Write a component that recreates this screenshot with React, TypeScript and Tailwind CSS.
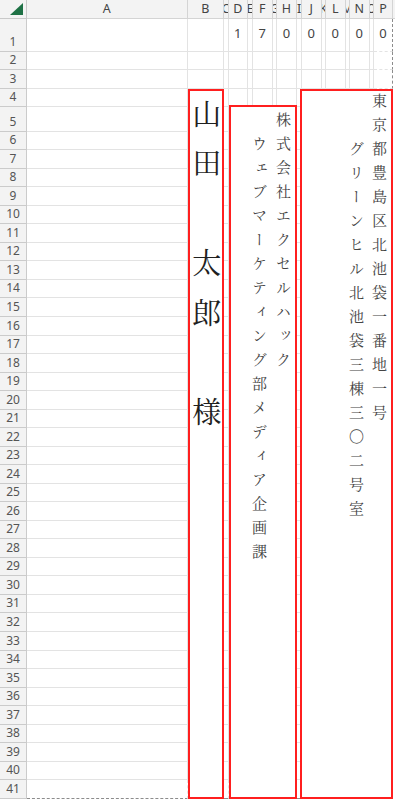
const columns = ["A", "B", "C", "D", "E", "F", "G", "H", "I", "J", "K", "L", "M", "N", "O", "P"];

// 1行目の郵便番号（D, F, H, J, L, N, P 列）
const zip: Record<string, string> = { D: "1", F: "7", H: "0", J: "0", L: "0", N: "0", P: "0" };

const jp = "font-['Noto_Serif_CJK_JP','Noto_Sans_CJK_JP',serif]";

// 結合セルに隠れるセル
function isMerged(row: number, col: string) {
  if (col === "B" && row >= 4) return true;
  if (["D", "E", "F", "G", "H"].includes(col) && row >= 5) return true;
  if (["J", "K", "L", "M", "N", "O", "P"].includes(col) && row >= 4) return true;
  return false;
}

export default function App() {
  const rows = Array.from({ length: 41 }, (_, i) => i + 1);

  return (
    <div className="h-[800px] w-[395px] overflow-hidden bg-white font-['Noto_Sans','Liberation_Sans',sans-serif]">
      <div className="grid grid-cols-[27px_160.5px_36.5px_4.5px_19.5px_5px_19.5px_4.5px_20px_5px_19.5px_4.5px_19.5px_4.5px_19.5px_4.5px_19px_2px] grid-rows-[19px_33.3px_repeat(3,18.13px)_25px_repeat(36,18.54px)]">
        {/* 左上の角 */}
        <div className="flex items-end justify-end border-r border-b border-[#c9c9c9] bg-[#f3f3f3] pr-[2px] pb-[2px]">
          <svg width="14" height="13" viewBox="0 0 14 13">
            <polygon points="13,0 13,12 0,12" fill="#1e7145" />
          </svg>
        </div>

        {/* 列見出し */}
        {columns.map((c) => (
          <div
            key={c}
            className="flex items-center justify-center overflow-hidden border-r border-b border-[#d4d4d4] bg-[#f3f3f3] text-[12.5px] leading-none text-[#444]"
          >
            {c}
          </div>
        ))}
        <div className="border-b border-[#d4d4d4] bg-[#f3f3f3]" />

        {rows.map((r) => (
          <div key={r} className="contents">
            {/* 行見出し */}
            <div className="flex items-end justify-center border-r border-b border-[#cbcbcb] bg-[#f3f3f3] pb-[3px] text-[12px] leading-[12px] text-[#555]">
              {r}
            </div>
            {columns
              .filter((c) => !isMerged(r, c))
              .map((c) => (
                <div
                  key={c}
                  className={
                    "flex items-center justify-center overflow-hidden pb-[3px] text-[13px] text-[#444] " +
                    (r === 41 ? "border-b border-dashed border-b-[#8c8c8c] " : "border-b border-b-[#e3e3e3] ") +
                    (c === "P" ? "border-r border-dashed border-r-[#8c8c8c]" : "border-r border-r-[#e3e3e3]")
                  }
                >
                  {r === 1 ? zip[c] : null}
                </div>
              ))}
            <div />
          </div>
        ))}

        {/* 宛名 */}
        <div className="[grid-area:5/3/43/4] flex justify-center border-2 border-[#ff1f1f] bg-white pt-[8px] pl-[2px]">
          <p className={`${jp} [writing-mode:vertical-rl] text-[29px] leading-none tracking-[20.8px] text-[#1f1f1f]`}>
            {"山田\u3000太郎\u3000様"}
          </p>
        </div>

        {/* 会社名・部署 */}
        <div className="[grid-area:6/5/43/10] -mt-[2px] flex justify-end border-2 border-[#ff1f1f] bg-white pt-[5px]">
          <p className={`${jp} [writing-mode:vertical-rl] text-[15px] leading-[24px] tracking-[9px] text-[#444]`}>
            {"株式会社エクセルハック"}
            <br />
            {"\u3000ウェブマーケティング部メディア企画課"}
          </p>
        </div>

        {/* 住所 */}
        <div className="[grid-area:5/11/43/18] -ml-[2px] flex justify-end border-2 border-[#ff1f1f] bg-white pt-[2px]">
          <p className={`${jp} [writing-mode:vertical-rl] text-[15px] leading-[23px] tracking-[9px] text-[#444]`}>
            {"東京都豊島区北池袋一番地一号"}
            <br />
            {"\u3000\u3000グリーンヒル北池袋三棟三〇二号室"}
          </p>
        </div>
      </div>
    </div>
  );
}
